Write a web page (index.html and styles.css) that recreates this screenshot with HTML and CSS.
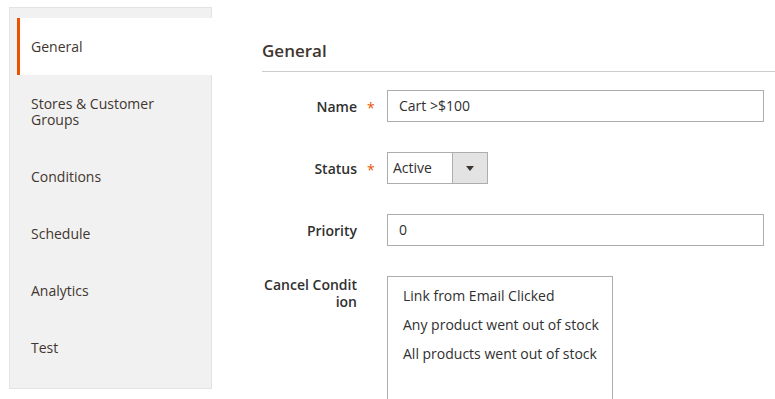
FILE: index.html
```html
<!DOCTYPE html>
<html lang="en">
<head>
  <meta charset="UTF-8">
  <meta name="viewport" content="width=device-width, initial-scale=1.0">
  <title>Edit Rule</title>
  <link rel="stylesheet" href="styles.css">
</head>
<body>
  <div class="page">
    <div class="tabs">
      <div class="tab active">General</div>
      <div class="tab">Stores &amp; Customer Groups</div>
      <div class="tab">Conditions</div>
      <div class="tab">Schedule</div>
      <div class="tab">Analytics</div>
      <div class="tab">Test</div>
    </div>

    <div class="main">
      <h2 class="section-title">General</h2>

      <div class="field">
        <label class="field-label">Name</label>
        <span class="required">*</span>
        <div class="control">
          <div class="input">Cart &gt;$100</div>
        </div>
      </div>

      <div class="field">
        <label class="field-label">Status</label>
        <span class="required">*</span>
        <div class="control">
          <div class="select">
            <span class="select-value">Active</span>
            <span class="select-btn">
              <svg width="8" height="5" viewBox="0 0 8 5"><path d="M0 0h8L4 5z" fill="#41362f"/></svg>
            </span>
          </div>
        </div>
      </div>

      <div class="field">
        <label class="field-label">Priority</label>
        <span class="required"></span>
        <div class="control">
          <div class="input">0</div>
        </div>
      </div>

      <div class="field">
        <label class="field-label multi">Cancel Condition</label>
        <span class="required"></span>
        <div class="control">
          <div class="multiselect">
            <div class="option">Link from Email Clicked</div>
            <div class="option">Any product went out of stock</div>
            <div class="option">All products went out of stock</div>
          </div>
        </div>
      </div>
    </div>
  </div>
</body>
</html>
```

FILE: styles.css
```css
body {
  font-family: "Open Sans", "Liberation Sans", sans-serif;
  font-size: 14px;
  color: #303030;
  margin: 0;
  background: #fff;
  overflow: hidden;
}
.page {
  display: flex;
  align-items: flex-start;
  padding: 7px 0 0 9px;
}
.tabs {
  width: 194px;
  background: #f1f1f1;
  border: 1px solid #e3e3e3;
  padding: 10px 0 12px 7px;
}
.tab {
  padding: 21px 10px 20px 11px;
  border-left: 3px solid transparent;
  line-height: 16px;
  color: #41362f;
}
.tab.active {
  background: #fff;
  border-left-color: #eb5202;
  margin-right: -1px;
}
.main {
  flex: 1;
  margin-left: 50px;
  padding-top: 32px;
}
.section-title {
  font-size: 17px;
  font-weight: 600;
  line-height: 24px;
  margin: 0 0 18px;
  padding-bottom: 8px;
  border-bottom: 1px solid #cccccc;
  color: #41362f;
}
.field {
  display: flex;
  align-items: flex-start;
  margin-bottom: 30px;
  padding-right: 11px;
}
.field-label {
  width: 95px;
  text-align: right;
  font-weight: 600;
  line-height: 17px;
  padding-top: 8px;
  word-break: break-all;
}
.field-label.multi {
  padding-top: 0;
}
.required {
  width: 30px;
  flex-shrink: 0;
  padding: 9px 0 0 10px;
  box-sizing: border-box;
  color: #eb5202;
  font-size: 14px;
  line-height: 17px;
}
.control {
  flex: 1;
}
.input {
  height: 32px;
  box-sizing: border-box;
  border: 1px solid #adadad;
  padding: 0 11px;
  line-height: 30px;
}
.select {
  display: flex;
  width: 101px;
  height: 32px;
  box-sizing: border-box;
  border: 1px solid #adadad;
}
.select-value {
  flex: 1;
  padding-left: 5px;
  line-height: 30px;
}
.select-btn {
  width: 34px;
  background: #e3e3e3;
  border-left: 1px solid #adadad;
  display: flex;
  align-items: center;
  justify-content: center;
}
.multiselect {
  width: 226px;
  height: 150px;
  box-sizing: border-box;
  border: 1px solid #adadad;
  padding: 4px 0;
}
.option {
  padding: 6px 15px;
  line-height: 17px;
  white-space: nowrap;
}
```
